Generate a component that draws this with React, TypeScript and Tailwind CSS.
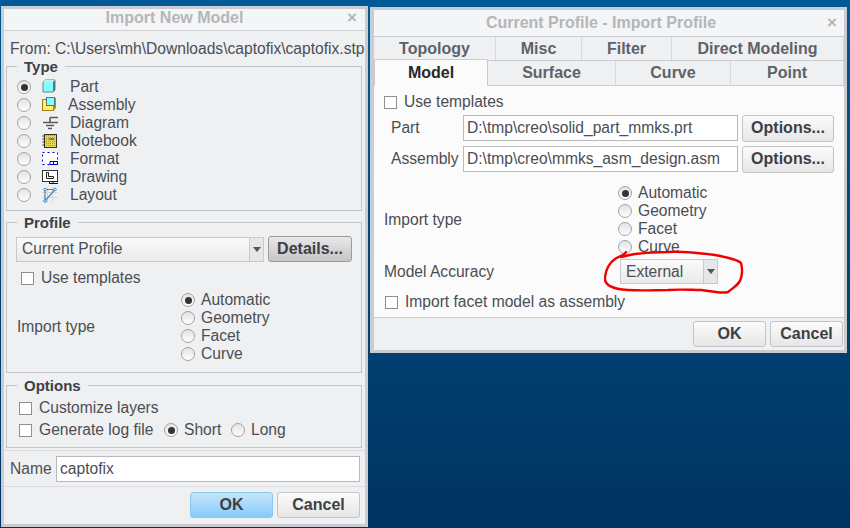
import type { ReactNode } from 'react';

const TYPE_ICONS: Record<string, ReactNode> = {
  Part: (
    <>
      <path d="M1 3 L3 1 H13 V11 L11 13 H1 Z" fill="#80ffff" stroke="#6a8488" />
      <path d="M1 3 L3 1 H13 L11 3 Z" fill="#d5e6e8" />
      <path d="M11 3 L13 1 V11 L11 13 Z" fill="#56777c" />
    </>
  ),
  Assembly: (
    <>
      <defs>
        <pattern id="dotsA" width="2" height="2" patternUnits="userSpaceOnUse">
          <rect width="2" height="2" fill="#ffe860" />
          <rect width="1" height="1" fill="#fff8c0" />
        </pattern>
      </defs>
      <rect x="0.5" y="2.5" width="11" height="11" fill="url(#dotsA)" stroke="#a07c18" />
      <path d="M11.5 2.5 L14 0.5 V11 L11.5 13.5 Z" fill="#b08c24" />
      <rect x="4.5" y="0.5" width="8" height="8" fill="#80ffff" stroke="#56777c" />
    </>
  ),
  Diagram: (
    <path d="M8 2.5 H16 M8 2.5 V7.5 M1 7.5 H16 M4 10.5 H12 M6 13.5 H10" fill="none" stroke="#5c5c5c" strokeWidth="1.6" />
  ),
  Notebook: (
    <>
      <defs>
        <pattern id="dotsN" width="2" height="2" patternUnits="userSpaceOnUse">
          <rect width="2" height="2" fill="#e8d850" />
          <rect width="1" height="1" fill="#a89c30" />
        </pattern>
      </defs>
      <rect x="2.5" y="1.5" width="12" height="13" fill="url(#dotsN)" stroke="#333" />
      <path d="M0.5 3 H3 M0.5 6 H3 M0.5 9 H3 M0.5 12 H3" stroke="#222" />
      <rect x="7" y="5" width="5" height="2" fill="#7d7d7d" />
    </>
  ),
  Format: (
    <>
      <rect x="0.5" y="1.5" width="15" height="12" fill="#fff" stroke="#0000c8" strokeDasharray="2 3" />
      <path d="M8 14 V10.5 H15.5 V14 M11.5 14 V10.5 M8 13.5 H15.5" fill="none" stroke="#0000c8" />
    </>
  ),
  Drawing: (
    <>
      <rect x="0.5" y="1.5" width="15" height="11" fill="#fff" stroke="#333" />
      <path d="M4.5 3.5 V9.5 H11.5 V7.5 H6.5 V3.5 Z" fill="none" stroke="#222" />
      <path d="M7.5 15 V12.5 H16 M11 15 V12.5 M7.5 14.5 H16" fill="none" stroke="#0000c8" />
    </>
  ),
  Layout: (
    <>
      <path d="M0 5.5 H16 M0 10.5 H16 M5.5 0 V16 M10.5 0 V16" stroke="#d8d8d0" />
      <path d="M3 2.5 H13 L3 14 Z" fill="none" stroke="#3f86c0" strokeWidth="1.2" />
      <circle cx="3" cy="2.5" r="1.3" fill="#fff" stroke="#3f86c0" />
      <circle cx="13" cy="2.5" r="1.3" fill="#fff" stroke="#3f86c0" />
      <circle cx="3" cy="14" r="1.3" fill="#fff" stroke="#3f86c0" />
    </>
  ),
};

function Radio({ checked = false }: { checked?: boolean }) {
  return (
    <span className="flex h-[14px] w-[14px] shrink-0 items-center justify-center rounded-full border border-[#a3a3a3] bg-gradient-to-b from-[#e2e2e2] to-white">
      {checked && <span className="h-[7px] w-[7px] rounded-full bg-[#333333]" />}
    </span>
  );
}

function Checkbox() {
  return <span className="block h-[13px] w-[13px] shrink-0 border border-[#8f8f8f] bg-white" />;
}

function Button({ children, className = '' }: { children: ReactNode; className?: string }) {
  return (
    <div
      className={`flex items-center justify-center rounded-[3px] border border-[#c4c4c4] bg-gradient-to-b from-[#fbfbfb] to-[#e6e6e6] text-[16px] font-bold text-[#3c3f44] ${className}`}
    >
      {children}
    </div>
  );
}

function Fieldset({ title, className, children }: { title: string; className: string; children: ReactNode }) {
  return (
    <div className={`relative mr-[3px] ml-[2px] border border-[#c2c6ca] ${className}`}>
      <span className="absolute top-[-9px] left-[10px] bg-[#eff0f2] px-[7px] text-[15px] leading-[18px] font-bold text-[#3e4146]">
        {title}
      </span>
      {children}
    </div>
  );
}

function ImportTypes() {
  return (
    <div className="flex flex-col">
      {['Automatic', 'Geometry', 'Facet', 'Curve'].map((label, i) => (
        <div key={label} className="flex h-[18px] items-center gap-[6px]">
          <Radio checked={i === 0} />
          <span>{label}</span>
        </div>
      ))}
    </div>
  );
}

function Dropdown({ label, className }: { label: string; className: string }) {
  return (
    <div className={`flex h-[25px] items-center border border-[#c8cbce] bg-gradient-to-b from-[#fafafa] to-[#eaeaea] ${className}`}>
      <span className="flex-1 pl-[5px]">{label}</span>
      <span className="flex h-full w-[14px] items-center justify-center border-l border-[#c8cbce] bg-[#e6e7e9]">
        <span className="h-0 w-0 border-x-[4px] border-t-[5px] border-x-transparent border-t-[#555]" />
      </span>
    </div>
  );
}

function ImportNewModel() {
  const types = ['Part', 'Assembly', 'Diagram', 'Notebook', 'Format', 'Drawing', 'Layout'];
  return (
    <div className="mt-[6px] ml-px flex h-[521px] w-[367px] flex-col border-[3px] border-[#c9cdd1] bg-[#eff0f2]">
      <div className="relative flex h-[22px] shrink-0 items-center justify-center border-b border-[#d0d3d6] bg-[#f4f5f6] pr-[20px] pb-[3px] text-[16px] font-bold text-[#b4b6b9]">
        Import New Model
        <span className="absolute right-[8px] text-[17px]">×</span>
      </div>
      <div className="mt-[5px] h-[30px] shrink-0 pl-[6px] leading-[26px] whitespace-nowrap">
        From: C:\Users\mh\Downloads\captofix\captofix.stp
      </div>
      <Fieldset title="Type" className="h-[145px] shrink-0 pt-[11px] pl-[10px]">
        {types.map((t) => (
          <div key={t} className="flex h-[18px] items-center">
            <Radio checked={t === 'Part'} />
            <svg width="16" height="16" viewBox="0 0 16 16" className="ml-[11px] shrink-0">
              {TYPE_ICONS[t]}
            </svg>
            <span className={t === 'Assembly' ? 'ml-[10px]' : 'ml-[12px]'}>{t}</span>
          </div>
        ))}
      </Fieldset>
      <Fieldset title="Profile" className="mt-[11px] h-[151px] shrink-0">
        <div className="mt-[13px] flex items-center pl-[9px]">
          <Dropdown label="Current Profile" className="w-[248px]" />
          <Button className="ml-[4px] h-[26px] w-[84px] !border-[#9a9a9a] !from-[#e8e8e8] !to-[#c6c6c6]">Details...</Button>
        </div>
        <div className="mt-[7px] flex h-[18px] items-center gap-[7px] pl-[14px]">
          <Checkbox />
          <span>Use templates</span>
        </div>
        <div className="mt-[4px] flex items-center">
          <span className="w-[174px] pl-[10px]">Import type</span>
          <ImportTypes />
        </div>
      </Fieldset>
      <Fieldset title="Options" className="mt-[12px] h-[63px] shrink-0 pl-[12px]">
        <div className="mt-[13px] flex h-[18px] items-center gap-[7px]">
          <Checkbox />
          <span>Customize layers</span>
        </div>
        <div className="mt-[4px] flex h-[18px] items-center">
          <Checkbox />
          <span className="ml-[7px] w-[125px]">Generate log file</span>
          <Radio checked />
          <span className="ml-[6px] w-[47px]">Short</span>
          <Radio />
          <span className="ml-[6px]">Long</span>
        </div>
      </Fieldset>
      <div className="mt-[2px] flex h-[37px] shrink-0 items-center border-y border-[#d8dadd] pl-[6px]">
        <span className="w-[46px]">Name</span>
        <div className="flex h-[26px] w-[304px] items-center border border-[#b9b9b9] bg-white pl-[3px]">captofix</div>
      </div>
      <div className="mt-[5px] flex justify-end gap-[4px] pr-[5px]">
        <Button className="h-[26px] w-[83px] !border-[#8cc6ee] !from-[#c6e6fb] !to-[#84cbfa]">OK</Button>
        <Button className="h-[26px] w-[83px]">Cancel</Button>
      </div>
    </div>
  );
}

function TabRow({ tabs, className }: { tabs: [string, string][]; className: string }) {
  return (
    <div className={`flex border-b border-[#c9cdd1] ${className}`}>
      {tabs.map(([label, width]) => (
        <div key={label} className={`flex items-center justify-center border-r border-[#d6d8db] text-[16px] font-bold text-[#5e6268] ${width}`}>
          {label}
        </div>
      ))}
    </div>
  );
}

function ImportProfile() {
  return (
    <div className="relative mt-[7px] ml-[2px] flex h-[346px] w-[477px] flex-col border-[3px] border-l-[4px] border-[#c9cdd1] bg-[#eff0f2]">
      <div className="relative flex h-[26px] shrink-0 items-center justify-center bg-[#f4f5f6] pr-[16px] pb-px text-[16px] font-bold text-[#b4b6b9]">
        Current Profile - Import Profile
        <span className="absolute right-[7px] text-[17px]">×</span>
      </div>
      <TabRow
        className="h-[25px] shrink-0 border-t"
        tabs={[['Topology', 'w-[122px]'], ['Misc', 'w-[86px]'], ['Filter', 'w-[90px]'], ['Direct Modeling', 'flex-1']]}
      />
      <div className="flex h-[25px] shrink-0">
        <div className="mt-[-2px] flex h-[27px] w-[114px] items-center justify-center rounded-t-[2px] border-x border-t border-[#c9cdd1] bg-[#fbfbfb] text-[16px] font-bold text-[#26282b]">
          Model
        </div>
        <TabRow
          className="flex-1"
          tabs={[['Surface', 'w-[128px]'], ['Curve', 'w-[115px]'], ['Point', 'flex-1']]}
        />
      </div>
      <div className="h-[232px] shrink-0 border-b border-[#c9cdd1] bg-[#fbfbfb]">
        <div className="mt-[7px] flex h-[18px] items-center gap-[7px] pl-[10px]">
          <Checkbox />
          <span>Use templates</span>
        </div>
        <div className="mt-[4px] flex h-[26px] items-center">
          <span className="w-[89px] pl-[17px]">Part</span>
          <div className="flex h-[26px] w-[275px] items-center border border-[#b9b9b9] bg-white pl-[3px]">D:\tmp\creo\solid_part_mmks.prt</div>
          <Button className="ml-[4px] h-[27px] w-[92px]">Options...</Button>
        </div>
        <div className="mt-[5px] flex h-[26px] items-center">
          <span className="w-[89px] pl-[17px]">Assembly</span>
          <div className="flex h-[26px] w-[275px] items-center border border-[#b9b9b9] bg-white pl-[3px]">D:\tmp\creo\mmks_asm_design.asm</div>
          <Button className="ml-[4px] h-[27px] w-[92px]">Options...</Button>
        </div>
        <div className="mt-[12px] flex items-center">
          <span className="w-[244px] pl-[10px]">Import type</span>
          <ImportTypes />
        </div>
        <div className="mt-[3px] flex items-center">
          <span className="w-[246px] pl-[10px]">Model Accuracy</span>
          <Dropdown label="External" className="w-[98px]" />
        </div>
        <div className="mt-[9px] flex h-[18px] items-center gap-[7px] pl-[11px]">
          <Checkbox />
          <span>Import facet model as assembly</span>
        </div>
      </div>
      <div className="mt-[3px] flex justify-end gap-[4px] pr-[1px]">
        <Button className="h-[26px] w-[73px]">OK</Button>
        <Button className="h-[26px] w-[73px]">Cancel</Button>
      </div>
      {/* red marker scribble around the accuracy dropdown */}
      <svg width="146" height="50" viewBox="0 0 146 50" className="absolute top-[239px] left-[230px]" fill="none">
        <path
          d="M22 3 C20 7 15 7 11 10 C5 14 2 21 1 28 C0 36 8 40 24 41 C38 42 52 41 64 41 C76 40 88 41 97 41 C107 42 118 45 124 43 C130 38 136 35 137 29 C139 23 138 18 137 14 C133 10 122 8 111 6 C95 4 80 2 64 3 C50 3 40 4 31 5 C25 6 21 7 17 8"
          stroke="#f00000"
          strokeWidth="2.4"
          strokeLinecap="round"
        />
      </svg>
    </div>
  );
}

export default function App() {
  return (
    <div className="flex h-[528px] w-[850px] items-start overflow-hidden bg-gradient-to-b from-[#015a96] to-[#00335f] font-['Liberation_Sans',Arial,sans-serif] text-[15.6px] leading-[18px] text-[#4a4e54]">
      <ImportNewModel />
      <ImportProfile />
    </div>
  );
}
